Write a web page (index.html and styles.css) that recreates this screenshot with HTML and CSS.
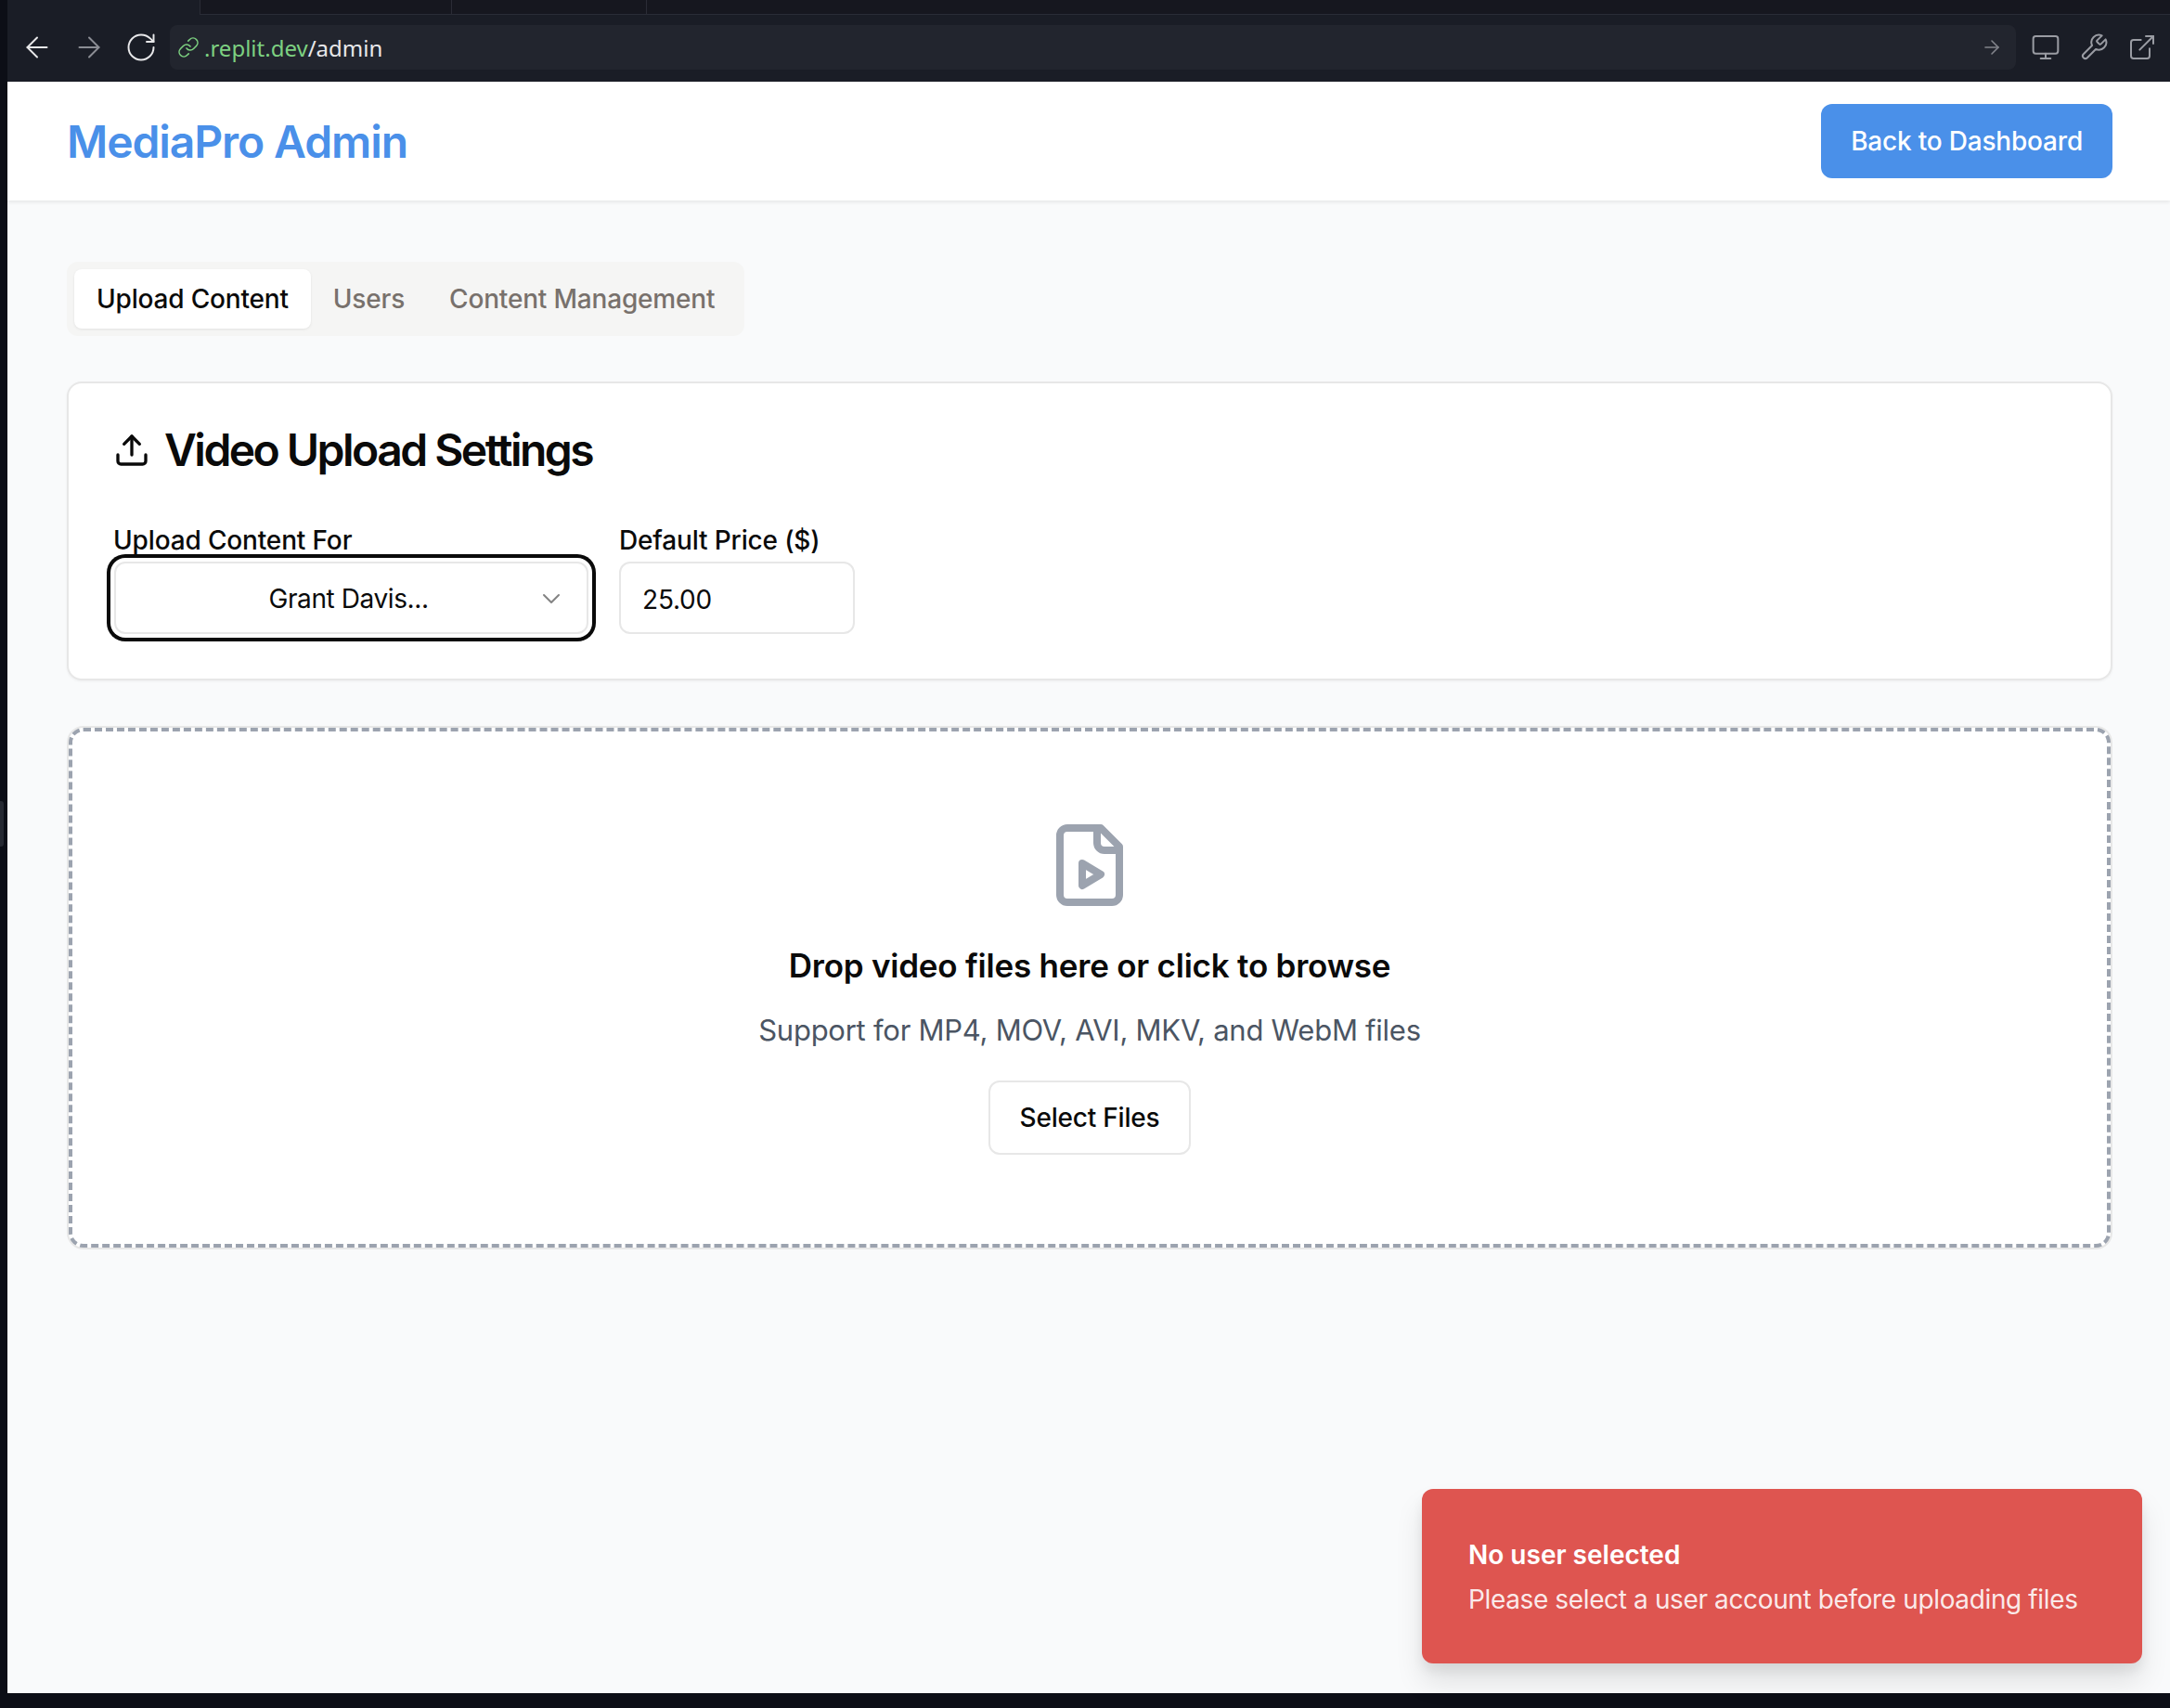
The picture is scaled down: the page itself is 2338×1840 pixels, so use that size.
FILE: index.html
```html
<!DOCTYPE html>
<html lang="en">
<head>
    <meta charset="UTF-8">
    <meta name="viewport" content="width=device-width, initial-scale=1.0">
    <title>MediaPro Admin</title>
    <link rel="stylesheet" href="styles.css">
</head>
<body>
    <div class="side-handle"></div>

    <div class="shell">
        <!-- Browser bar -->
        <div class="tab-strip">
            <div class="tab-strip-tabs">
                <div class="strip-tab strip-tab-wide"></div>
                <div class="strip-tab strip-tab-narrow"></div>
            </div>
        </div>
        <div class="toolbar">
            <svg class="tool-icon" viewBox="0 0 24 24"><path d="m12 19-7-7 7-7"/><path d="M19 12H5"/></svg>
            <svg class="tool-icon tool-icon-dim" viewBox="0 0 24 24"><path d="M5 12h14"/><path d="m12 5 7 7-7 7"/></svg>
            <svg class="tool-icon" viewBox="0 0 24 24"><path d="M21 12a9 9 0 1 1-9-9c2.52 0 4.93 1 6.74 2.74L21 8"/><path d="M21 3v5h-5"/></svg>
            <div class="address-bar">
                <svg class="link-icon" viewBox="0 0 24 24"><path d="M10 13a5 5 0 0 0 7.54.54l3-3a5 5 0 0 0-7.07-7.07l-1.72 1.71"/><path d="M14 11a5 5 0 0 0-7.54-.54l-3 3a5 5 0 0 0 7.07 7.07l1.71-1.71"/></svg>
                <span class="address-text"><span class="address-host">.replit.dev</span>/admin</span>
                <svg class="go-icon" viewBox="0 0 24 24"><path d="M5 12h14"/><path d="m12 5 7 7-7 7"/></svg>
            </div>
            <div class="toolbar-right">
                <svg class="side-icon" viewBox="0 0 24 24"><rect x="2" y="3" width="20" height="14" rx="2"/><path d="M8 21h8"/><path d="M12 17v4"/></svg>
                <svg class="side-icon" viewBox="0 0 24 24"><path d="M14.7 6.3a1 1 0 0 0 0 1.4l1.6 1.6a1 1 0 0 0 1.4 0l3.77-3.77a6 6 0 0 1-7.94 7.94l-6.91 6.91a2.12 2.12 0 0 1-3-3l6.91-6.91a6 6 0 0 1 7.94-7.94l-3.76 3.76z"/></svg>
                <svg class="side-icon" viewBox="0 0 24 24"><path d="M15 3h6v6"/><path d="M10 14 21 3"/><path d="M18 13v6a2 2 0 0 1-2 2H5a2 2 0 0 1-2-2V8a2 2 0 0 1 2-2h6"/></svg>
            </div>
        </div>

        <!-- App -->
        <div class="page">
            <header class="app-header">
                <h1 class="brand">MediaPro Admin</h1>
                <button class="btn-primary">Back to Dashboard</button>
            </header>

            <main class="content">
                <div class="tabs">
                    <div class="tab tab-active">Upload Content</div>
                    <div class="tab">Users</div>
                    <div class="tab">Content Management</div>
                </div>

                <section class="card">
                    <h2 class="card-title">
                        <svg class="title-icon" viewBox="0 0 24 24"><path d="M21 15v4a2 2 0 0 1-2 2H5a2 2 0 0 1-2-2v-4"/><path d="m17 8-5-5-5 5"/><path d="M12 3v12"/></svg>
                        Video Upload Settings
                    </h2>
                    <div class="fields">
                        <div class="field">
                            <label class="field-label">Upload Content For</label>
                            <button class="select-box">
                                <span class="select-value">Grant Davis...</span>
                                <svg class="chevron" viewBox="0 0 24 24"><path d="m6 9 6 6 6-6"/></svg>
                            </button>
                        </div>
                        <div class="field">
                            <label class="field-label" for="price">Default Price ($)</label>
                            <input class="price-input" id="price" type="text" value="25.00">
                        </div>
                    </div>
                </section>

                <section class="dropzone">
                    <svg class="file-icon" viewBox="0 0 24 24"><path d="M15 2H6a2 2 0 0 0-2 2v16a2 2 0 0 0 2 2h12a2 2 0 0 0 2-2V7Z"/><path d="M14 2v4a2 2 0 0 0 2 2h4"/><path d="m10 11.5 5 3-5 3v-6Z"/></svg>
                    <h3 class="drop-title">Drop video files here or click to browse</h3>
                    <p class="drop-note">Support for MP4, MOV, AVI, MKV, and WebM files</p>
                    <button class="btn-outline">Select Files</button>
                </section>
            </main>

            <div class="toast">
                <div class="toast-title">No user selected</div>
                <div class="toast-text">Please select a user account before uploading files</div>
            </div>
        </div>
    </div>
</body>
</html>
```

FILE: styles.css
```css
* {
    margin: 0;
    padding: 0;
    box-sizing: border-box;
}

body {
    position: relative;
    width: 2338px;
    height: 1840px;
    overflow: hidden;
    background-color: #0c0e16;
    font-family: Inter, "Liberation Sans", sans-serif;
    color: #0a0a0a;
}

button, input {
    font-family: inherit;
}

svg {
    fill: none;
    stroke: currentColor;
    stroke-linecap: round;
    stroke-linejoin: round;
    flex-shrink: 0;
}

.side-handle {
    position: absolute;
    left: 0;
    top: 863px;
    width: 4px;
    height: 49px;
    background-color: #262932;
    border-radius: 0 3px 3px 0;
}

.shell {
    display: flex;
    flex-direction: column;
    height: 1824px;
    margin-left: 8px;
}

/* Browser bar */
.tab-strip {
    height: 16px;
    padding-left: 207px;
    background-color: #1a1d26;
}

.tab-strip-tabs {
    display: flex;
    height: 16px;
    background-color: #16171f;
    border-left: 1px solid #2a2c36;
    border-bottom: 1px solid #2a2c36;
}

.strip-tab {
    border-right: 1px solid #2a2c36;
}

.strip-tab-wide {
    width: 271px;
}

.strip-tab-narrow {
    width: 210px;
}

.toolbar {
    display: flex;
    align-items: center;
    height: 72px;
    padding: 0 14px 2px 14px;
    background-color: #1a1d26;
    color: #e8e8ea;
}

.tool-icon {
    width: 36px;
    height: 36px;
    margin-right: 20px;
    stroke-width: 1.3;
}

.tool-icon-dim {
    color: #8b8d94;
}

.tool-icon:nth-child(3) {
    margin-right: 13px;
}

.address-bar {
    flex: 1;
    display: flex;
    align-items: center;
    height: 48px;
    padding: 0 14px 0 8px;
    background-color: #22252e;
    border-radius: 8px;
}

.link-icon {
    width: 24px;
    height: 24px;
    margin-right: 5px;
    color: #7dd181;
    stroke-width: 1.6;
}

.address-text {
    flex: 1;
    font-family: "Noto Sans", sans-serif;
    font-size: 24px;
    color: #e8e8ea;
}

.address-host {
    color: #7dd181;
}

.go-icon {
    width: 24px;
    height: 24px;
    color: #82848b;
    stroke-width: 1.6;
}

.toolbar-right {
    display: flex;
    gap: 20px;
    margin-left: 16px;
    color: #9a9ca3;
}

.side-icon {
    width: 32px;
    height: 32px;
    stroke-width: 1.5;
}

/* App */
.page {
    position: relative;
    flex: 1;
    background-color: #f9fafb;
}

.app-header {
    display: flex;
    align-items: center;
    justify-content: space-between;
    height: 128px;
    padding: 0 62px 0 64px;
    background-color: #fff;
    box-shadow: 0 2px 4px rgba(0, 0, 0, 0.08);
}

.brand {
    font-size: 48px;
    font-weight: 600;
    letter-spacing: -1.1px;
    color: #4a90e9;
}

.btn-primary {
    height: 80px;
    padding: 0 32px;
    font-size: 28px;
    font-weight: 500;
    letter-spacing: -0.2px;
    color: #fff;
    background-color: #4a90e9;
    border: none;
    border-radius: 12px;
}

.content {
    padding: 66px 62px 0 64px;
}

.tabs {
    display: inline-flex;
    height: 80px;
    padding: 8px;
    margin-bottom: 49px;
    background-color: #f5f5f4;
    border-radius: 12px;
    vertical-align: top;
}

.tab {
    display: flex;
    align-items: center;
    padding: 0 24px;
    font-size: 28px;
    font-weight: 500;
    letter-spacing: -0.18px;
    color: #78716c;
    border-radius: 8px;
}

.tab-active {
    color: #0a0a0a;
    background-color: #fff;
    box-shadow: 0 1px 3px rgba(0, 0, 0, 0.08);
}

.card {
    height: 322px;
    padding: 48px;
    margin-bottom: 51px;
    background-color: #fff;
    border: 2px solid #e7e7e7;
    border-radius: 16px;
    box-shadow: 0 1px 3px rgba(0, 0, 0, 0.05);
}

.card-title {
    display: flex;
    align-items: center;
    gap: 15px;
    height: 48px;
    font-size: 48px;
    font-weight: 600;
    letter-spacing: -2.55px;
    line-height: 48px;
}

.title-icon {
    width: 40px;
    height: 40px;
    stroke-width: 2;
}

.fields {
    display: flex;
    gap: 33px;
    margin-top: 48px;
}

.field {
    display: flex;
    flex-direction: column;
}

.field-label {
    height: 48px;
    font-size: 28px;
    font-weight: 500;
    letter-spacing: -0.15px;
    line-height: 50px;
}

.select-box {
    display: flex;
    align-items: center;
    width: 511px;
    height: 78px;
    margin-left: 1px;
    padding: 2px 22px 0 48px;
    background-color: #fff;
    border: 2px solid #e7e7e7;
    border-radius: 12px;
    box-shadow: 0 0 0 4px #fff, 0 0 0 8px #0a0a0a;
}

.select-value {
    flex: 1;
    font-size: 28px;
    letter-spacing: -0.4px;
    color: #0a0a0a;
    text-align: center;
}

.chevron {
    width: 32px;
    height: 32px;
    color: #0a0a0a;
    opacity: 0.5;
    stroke-width: 1.5;
}

.price-input {
    width: 254px;
    height: 78px;
    padding: 3px 23px 0;
    font-size: 28px;
    letter-spacing: -0.2px;
    color: #0a0a0a;
    background-color: #fff;
    border: 2px solid #e7e7e7;
    border-radius: 12px;
}

.dropzone {
    display: flex;
    flex-direction: column;
    align-items: center;
    height: 560px;
    margin: 0 2px;
    padding-top: 96px;
    background-color: #fff;
    border: 4px dashed #9ca3af;
    border-radius: 16px;
    box-shadow: 0 0 0 2px #e7e7e7;
}

.file-icon {
    width: 96px;
    height: 96px;
    color: #9ca3af;
    stroke-width: 2;
}

.drop-title {
    margin-top: 32px;
    font-size: 35px;
    font-weight: 600;
    letter-spacing: -0.22px;
    line-height: 56px;
}

.drop-note {
    margin-top: 14px;
    font-size: 31px;
    letter-spacing: -0.25px;
    color: #4b5563;
    line-height: 56px;
}

.btn-outline {
    width: 218px;
    height: 80px;
    margin-top: 26px;
    font-size: 28px;
    font-weight: 500;
    letter-spacing: -0.2px;
    color: #0a0a0a;
    background-color: #fff;
    border: 2px solid #e7e7e7;
    border-radius: 12px;
}

.toast {
    position: absolute;
    left: 1524px;
    top: 1516px;
    width: 776px;
    height: 188px;
    padding: 48px 50px;
    color: #fff;
    background-color: #de5550;
    border-radius: 12px;
    box-shadow: 0 20px 30px rgba(0, 0, 0, 0.1), 0 8px 12px rgba(0, 0, 0, 0.06);
}

.toast-title {
    font-size: 28px;
    font-weight: 600;
    line-height: 46px;
}

.toast-text {
    margin-top: 2px;
    font-size: 28px;
    letter-spacing: -0.37px;
    line-height: 46px;
    color: rgba(255, 255, 255, 0.9);
}
```
